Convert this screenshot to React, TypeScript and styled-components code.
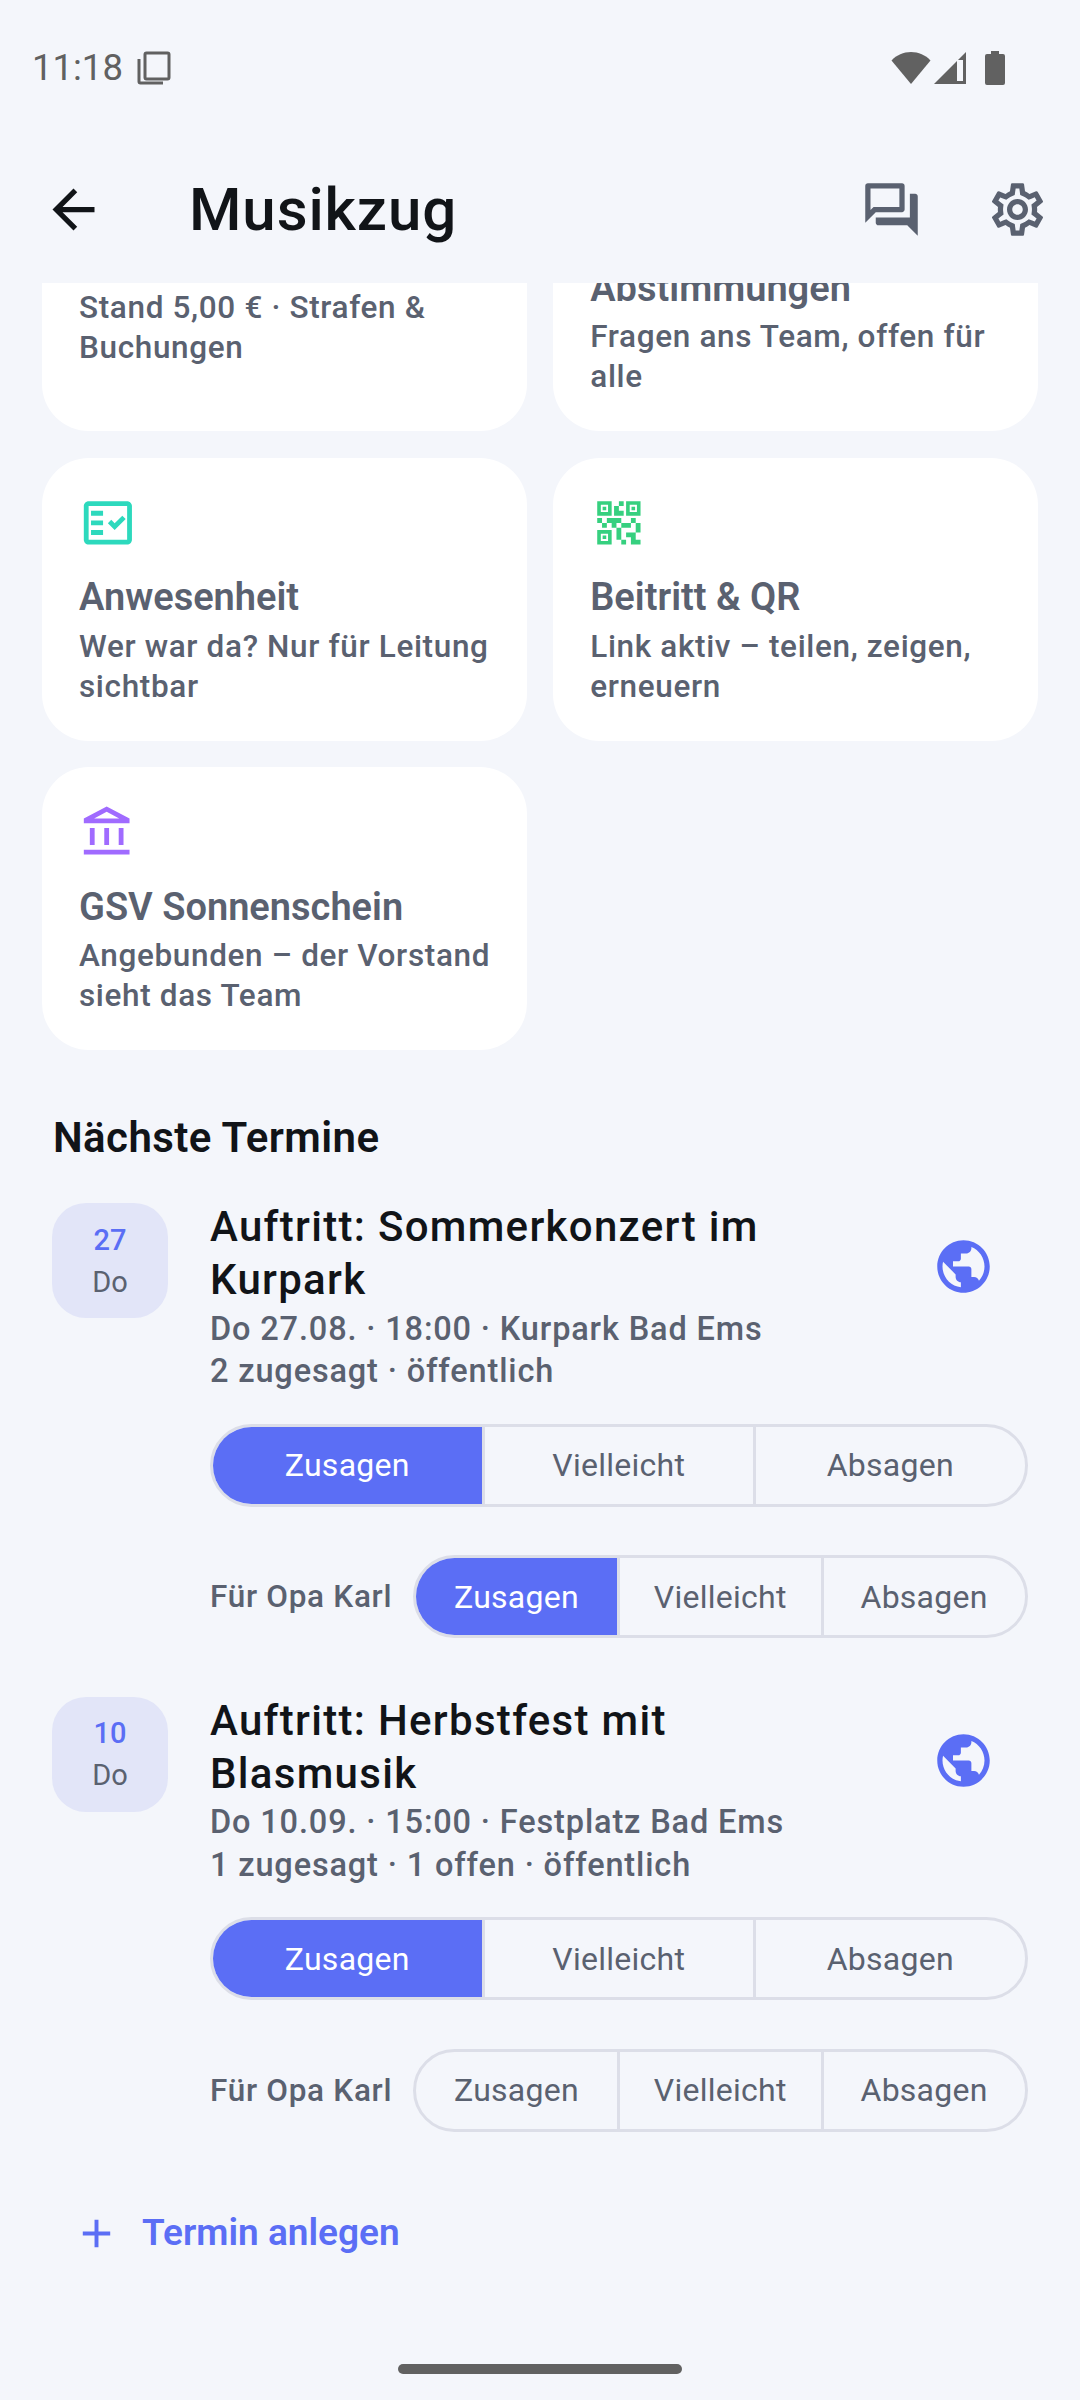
import React from "react";
import styled, { createGlobalStyle } from "styled-components";
import {
  MdAdd,
  MdArrowBack,
  MdOutlineAccountBalance,
  MdOutlineFactCheck,
  MdOutlineForum,
  MdOutlineHowToVote,
  MdOutlineQrCode2,
  MdOutlineSettings,
  MdPublic,
} from "react-icons/md";

const Global = createGlobalStyle`
  html, body { margin: 0; padding: 0; background: #f4f6fb; }
  * { box-sizing: border-box; }
`;

const Page = styled.div`
  width: 1080px;
  height: 2400px;
  overflow: hidden;
  position: relative;
  background: #f4f6fb;
  font-family: Roboto, "Liberation Sans", sans-serif;
  display: flex;
  flex-direction: column;
`;

const StatusBar = styled.div`
  height: 136px;
  flex: none;
  display: flex;
  align-items: center;
  padding: 0 0 0 32px;
  color: #616161;
  font-size: 36.5px;
`;
const StatusTime = styled.span`
  line-height: 1;
`;
const StatusLeftIcon = styled.svg`
  width: 34px;
  height: 34px;
  margin-left: 14px;
  flex: none;
`;
const StatusRight = styled.div`
  margin-left: auto;
  display: flex;
  align-items: center;
  padding-right: 75px;
`;
const WifiIcon = styled.svg`
  width: 40px;
  height: 34px;
`;
const SignalIcon = styled.svg`
  width: 34px;
  height: 34px;
  margin-left: 2px;
`;
const BatteryIcon = styled.svg`
  width: 20px;
  height: 34px;
  margin-left: 18px;
`;

const AppBar = styled.header`
  height: 147px;
  flex: none;
  display: flex;
  align-items: center;
`;
const BackButton = styled.div`
  width: 63px;
  height: 63px;
  margin-left: 42px;
  color: #111418;
  font-size: 63px;
  display: flex;
`;
const PageTitle = styled.h1`
  margin: 0 0 0 84px;
  font-size: 60px;
  line-height: 1.2;
  letter-spacing: 0.9px;
  font-weight: 500;
  color: #111418;
`;
const Actions = styled.div`
  margin-left: auto;
  display: flex;
`;
const ActionButton = styled.div`
  width: 126px;
  height: 126px;
  display: flex;
  align-items: center;
  justify-content: center;
  color: #5a6170;
  font-size: 63px;
`;

const Viewport = styled.main`
  flex: 1;
  min-height: 0;
  overflow: hidden;
`;
const Scrolled = styled.div`
  margin-top: -135px;
`;

const Grid = styled.section`
  display: grid;
  grid-template-columns: 485px 485px;
  gap: 26.25px;
  padding: 0 42px;
`;
const Card = styled.article<{ $top?: number }>`
  height: 283.25px;
  background: #fff;
  border-radius: 47px;
  padding: ${(p) => p.$top ?? 36.75}px 24px 0 37px;
  overflow: hidden;
`;
const IconSlot = styled.div<{ $color: string }>`
  height: 57.75px;
  font-size: 57.75px;
  line-height: 0;
  color: ${(p) => p.$color};
  margin-bottom: 21px;
`;
const CardTitle = styled.h3`
  margin: 0 0 5.5px;
  font-size: 38px;
  line-height: 48px;
  font-weight: 600;
  color: #5a6170;
  white-space: nowrap;
`;
const CardText = styled.p`
  margin: 0;
  font-size: 31.5px;
  line-height: 40px;
  letter-spacing: 0.65px;
  font-weight: 500;
  color: #5a6170;
`;

const Heading = styled.h2`
  margin: 62px 0 36px 53px;
  font-size: 42px;
  line-height: 52px;
  letter-spacing: 0.4px;
  font-weight: 600;
  color: #111418;
`;

const EventList = styled.div`
  display: flex;
  flex-direction: column;
  gap: 55.5px;
  padding: 0 52.5px 0 52px;
`;
const EventRow = styled.article`
  display: flex;
  align-items: flex-start;
  gap: 42px;
`;
const DateChip = styled.div`
  width: 116px;
  height: 115px;
  margin-top: 3px;
  flex: none;
  background: #e2e5f8;
  border-radius: 34px;
  display: flex;
  flex-direction: column;
  align-items: center;
  justify-content: center;
  gap: 4px;
`;
const DateDay = styled.span`
  font-size: 29px;
  line-height: 38px;
  font-weight: 500;
  color: #5b6ef5;
`;
const DateWeekday = styled.span`
  font-size: 29px;
  line-height: 38px;
  color: #5a6170;
`;
const EventBody = styled.div`
  flex: 1;
  min-width: 0;
`;
const EventHead = styled.div`
  display: flex;
  align-items: flex-start;
  padding-right: 32.5px;
  justify-content: space-between;
`;
const EventInfo = styled.div`
  width: 640px;
`;
const EventTitle = styled.h3`
  margin: 0 0 1.5px;
  font-size: 42px;
  line-height: 53px;
  letter-spacing: 1.31px;
  font-weight: 500;
  color: #111418;
`;
const EventMeta = styled.div`
  font-size: 32.5px;
  line-height: 42.5px;
  letter-spacing: 0.85px;
  font-weight: 500;
  color: #5a6170;
`;
const GlobeSlot = styled.div`
  width: 63px;
  height: 63px;
  margin-top: 35px;
  color: #5b6ef5;
  font-size: 63px;
  line-height: 0;
`;
const SegRow = styled.div<{ $gap: number }>`
  display: flex;
  align-items: center;
  margin-top: ${(p) => p.$gap}px;
`;
const ForLabel = styled.span`
  font-size: 31.5px;
  font-weight: 500;
  letter-spacing: 0.7px;
  color: #5a6170;
  white-space: nowrap;
  width: 203px;
  flex: none;
`;
const Segmented = styled.div`
  flex: 1;
  height: 83px;
  display: flex;
  border: 3px solid #dcdee8;
  border-radius: 42px;
  overflow: hidden;
`;
const Segment = styled.div<{ $on?: boolean }>`
  flex: 1 1 0;
  display: flex;
  align-items: center;
  justify-content: center;
  font-size: 32px;
  letter-spacing: 0.25px;
  color: ${(p) => (p.$on ? "#ffffff" : "#5a6170")};
  background: ${(p) => (p.$on ? "#5b6ef5" : "transparent")};
  & + & {
    border-left: 3px solid #dcdee8;
  }
`;

const AddButton = styled.div`
  display: flex;
  align-items: center;
  margin: 77.5px 0 0 73px;
  color: #5b6ef5;
  font-size: 37px;
  font-weight: 600;
  line-height: 48px;
  gap: 22px;
`;
const AddIcon = styled(MdAdd)`
  width: 47px;
  height: 47px;
  flex: none;
`;
const HomeBar = styled.div`
  position: absolute;
  left: 398px;
  bottom: 26px;
  width: 284px;
  height: 10px;
  border-radius: 5px;
  background: #616161;
`;

const Seg = ({ on }: { on?: boolean }) => (
  <Segmented>
    <Segment $on={on}>Zusagen</Segment>
    <Segment>Vielleicht</Segment>
    <Segment>Absagen</Segment>
  </Segmented>
);

const events = [
  {
    day: "27",
    title: "Auftritt: Sommerkonzert im Kurpark",
    meta: ["Do 27.08. · 18:00 · Kurpark Bad Ems", "2 zugesagt · öffentlich"],
    guestOn: true,
  },
  {
    day: "10",
    title: "Auftritt: Herbstfest mit Blasmusik",
    meta: ["Do 10.09. · 15:00 · Festplatz Bad Ems", "1 zugesagt · 1 offen · öffentlich"],
    guestOn: false,
  },
];

export default function App() {
  return (
    <Page>
      <Global />
      <StatusBar>
        <StatusTime>11:18</StatusTime>
        <StatusLeftIcon viewBox="0 0 34 34" fill="none" stroke="#616161" strokeWidth="3">
          <rect x="8" y="2" width="24" height="26" rx="1.5" />
          <path d="M2 8v22.5a1.5 1.5 0 0 0 1.5 1.5H26" />
        </StatusLeftIcon>
        <StatusRight>
          <WifiIcon viewBox="0 0 40 34">
            <path d="M0.5 9.5C5.5 4 12.5 1 20 1s14.5 3 19.5 8.5L20 33z" fill="#616161" />
          </WifiIcon>
          <SignalIcon viewBox="0 0 34 34">
            <path d="M33 1v32H1z" fill="#616161" />
            <rect x="24" y="9" width="6" height="21" fill="#f4f6fb" />
          </SignalIcon>
          <BatteryIcon viewBox="0 0 20 34">
            <path d="M6 0h8v3h4a2 2 0 0 1 2 2v27a2 2 0 0 1-2 2H2a2 2 0 0 1-2-2V5a2 2 0 0 1 2-2h4z" fill="#616161" />
          </BatteryIcon>
        </StatusRight>
      </StatusBar>
      <AppBar>
        <BackButton>
          <MdArrowBack />
        </BackButton>
        <PageTitle>Musikzug</PageTitle>
        <Actions>
          <ActionButton>
            <MdOutlineForum />
          </ActionButton>
          <ActionButton>
            <MdOutlineSettings />
          </ActionButton>
        </Actions>
      </AppBar>
      <Viewport>
        <Scrolled>
          <Grid>
            <Card $top={139.5}>
              <CardText>Stand 5,00 € · Strafen &amp; Buchungen</CardText>
            </Card>
            <Card>
              <IconSlot $color="#f59e0b">
                <MdOutlineHowToVote />
              </IconSlot>
              <CardTitle>Abstimmungen</CardTitle>
              <CardText>Fragen ans Team, offen für alle</CardText>
            </Card>
            <Card>
              <IconSlot $color="#2dd9bd">
                <MdOutlineFactCheck />
              </IconSlot>
              <CardTitle>Anwesenheit</CardTitle>
              <CardText>Wer war da? Nur für Leitung sichtbar</CardText>
            </Card>
            <Card>
              <IconSlot $color="#36d07f">
                <MdOutlineQrCode2 />
              </IconSlot>
              <CardTitle>Beitritt &amp; QR</CardTitle>
              <CardText>Link aktiv – teilen, zeigen, erneuern</CardText>
            </Card>
            <Card>
              <IconSlot $color="#a06bff">
                <MdOutlineAccountBalance />
              </IconSlot>
              <CardTitle>GSV Sonnenschein</CardTitle>
              <CardText>Angebunden – der Vorstand sieht das Team</CardText>
            </Card>
          </Grid>
          <Heading>Nächste Termine</Heading>
          <EventList>
            {events.map((e) => (
              <EventRow key={e.day}>
                <DateChip>
                  <DateDay>{e.day}</DateDay>
                  <DateWeekday>Do</DateWeekday>
                </DateChip>
                <EventBody>
                  <EventHead>
                    <EventInfo>
                      <EventTitle>{e.title}</EventTitle>
                      {e.meta.map((m) => (
                        <EventMeta key={m}>{m}</EventMeta>
                      ))}
                    </EventInfo>
                    <GlobeSlot>
                      <MdPublic />
                    </GlobeSlot>
                  </EventHead>
                  <SegRow $gap={31}>
                    <Seg on />
                  </SegRow>
                  <SegRow $gap={48.5}>
                    <ForLabel>Für Opa Karl</ForLabel>
                    <Seg on={e.guestOn} />
                  </SegRow>
                </EventBody>
              </EventRow>
            ))}
          </EventList>
          <AddButton>
            <AddIcon />
            Termin anlegen
          </AddButton>
        </Scrolled>
      </Viewport>
      <HomeBar />
    </Page>
  );
}
